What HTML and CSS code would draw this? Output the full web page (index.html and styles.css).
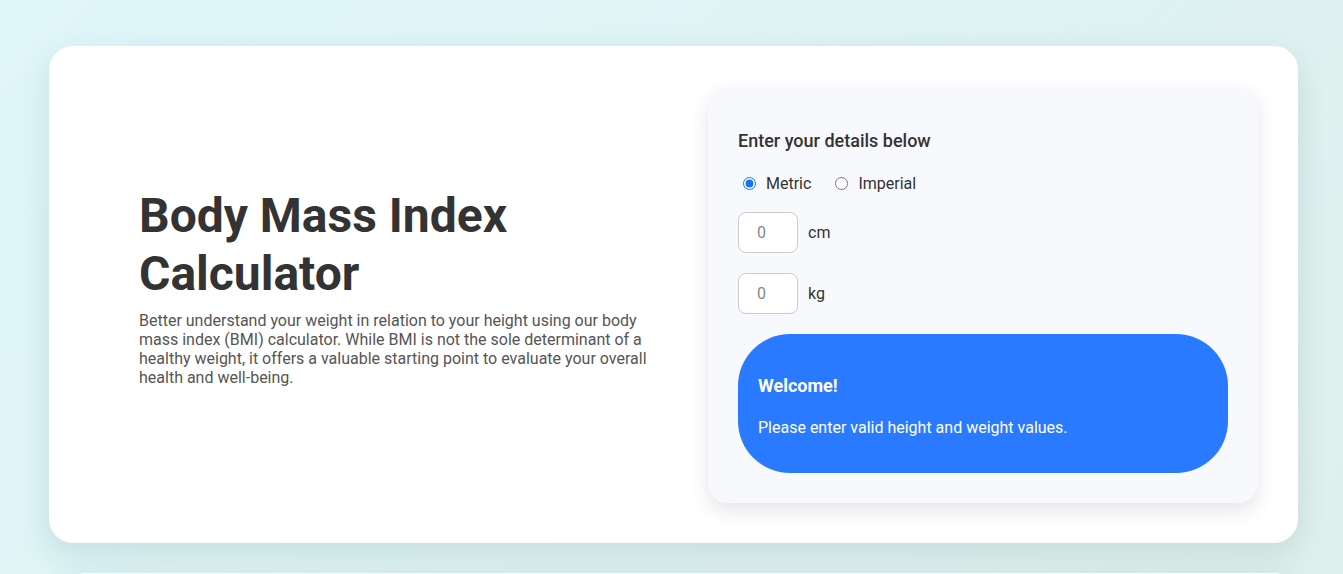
FILE: index.html
```html
<!DOCTYPE html>
<html lang="en">
<head>
<meta charset="utf-8">
<title>BMI Calculator</title>
<link rel="stylesheet" href="styles.css">
</head>
<body>
<main class="page">
  <section class="card">
    <div class="intro">
      <h1 class="title">Body Mass Index Calculator</h1>
      <p class="lead">Better understand your weight in relation to your height using our body mass index (BMI) calculator. While BMI is not the sole determinant of a healthy weight, it offers a valuable starting point to evaluate your overall health and well-being.</p>
    </div>
    <div class="panel">
      <h2 class="panel-title">Enter your details below</h2>
      <div class="units">
        <label class="unit"><input type="radio" name="unit" checked> Metric</label>
        <label class="unit"><input type="radio" name="unit"> Imperial</label>
      </div>
      <div class="field">
        <input class="num" type="text" placeholder="0">
        <span class="suffix">cm</span>
      </div>
      <div class="field">
        <input class="num" type="text" placeholder="0">
        <span class="suffix">kg</span>
      </div>
      <div class="result">
        <h3 class="result-title">Welcome!</h3>
        <p class="result-text">Please enter valid height and weight values.</p>
      </div>
    </div>
  </section>
  <section class="card next"></section>
</main>
</body>
</html>
```

FILE: styles.css
```css
* { box-sizing: border-box; }
html, body { margin: 0; height: 100%; }
body {
  font-family: Roboto, "Liberation Sans", Arial, sans-serif;
  background: linear-gradient(135deg, #dff6fa 0%, #def3f3 50%, #dfefec 100%);
  color: #333;
  overflow: hidden;
}
.page {
  padding: 46px 45px 0 49px;
}
.card {
  background: #fff;
  border-radius: 24px;
  box-shadow: 0 10px 30px rgba(40, 90, 95, 0.14);
  padding: 41px 40px 40px 40px;
  display: flex;
  align-items: center;
  height: 497px;
}
.card.next {
  margin: 30px 0 0 13px;
  height: 300px;
}
.intro {
  flex: 1;
  padding: 0 50px;
  margin-top: -16px;
}
.title {
  font-size: 48px;
  font-weight: 700;
  line-height: 1.2;
  margin: 0 0 9px 0;
  color: #333;
}
.lead {
  font-size: 16px;
  line-height: 19px;
  color: #555;
  margin: 0;
}
.panel {
  width: 550px;
  height: 416px;
  background: #f8f9fd;
  border-radius: 20px;
  box-shadow: 0 8px 20px rgba(0, 0, 0, 0.1);
  padding: 42px 30px 30px 30px;
  display: flex;
  flex-direction: column;
}
.panel-title {
  font-size: 18px;
  font-weight: 500;
  margin: 0 0 21px 0;
  line-height: 24px;
  color: #333;
}
.units {
  display: flex;
  gap: 19px;
  font-size: 16px;
  color: #333;
  margin-bottom: 19px;
}
.unit {
  display: flex;
  align-items: center;
  gap: 10px;
}
.unit input {
  margin: 0 0 0 5px;
  width: 13px;
  height: 13px;
  accent-color: #1a73e8;
}
.field {
  display: flex;
  align-items: center;
  gap: 10px;
  margin-bottom: 20px;
}
.num {
  width: 60px;
  height: 41px;
  border: 1px solid #ccc;
  border-radius: 8px;
  background: #fff;
  padding: 0 0 0 18px;
  font-family: inherit;
  font-size: 16px;
  color: #333;
}
.num::placeholder { color: #888; }
.suffix {
  font-size: 16px;
  color: #333;
}
.result {
  background: #2a7aff;
  color: #fff;
  border-radius: 52px;
  padding: 20px;
  height: 139px;
}
.result-title {
  font-size: 18px;
  font-weight: 700;
  margin: 21px 0 22px 0;
  line-height: 21px;
}
.result-text {
  font-size: 16px;
  margin: 0;
  line-height: 19px;
}
```
